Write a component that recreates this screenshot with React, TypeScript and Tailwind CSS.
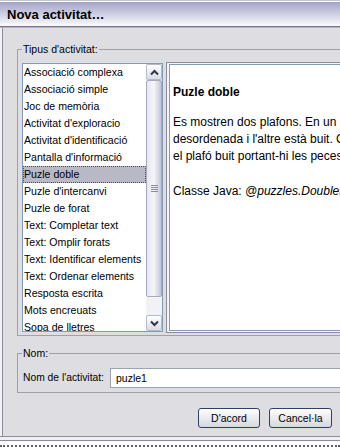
import React from "react";

const items = [
  "Associació complexa",
  "Associació simple",
  "Joc de memòria",
  "Activitat d'exploracio",
  "Activitat d'identificació",
  "Pantalla d'informació",
  "Puzle doble",
  "Puzle d'intercanvi",
  "Puzle de forat",
  "Text: Completar text",
  "Text: Omplir forats",
  "Text: Identificar elements",
  "Text: Ordenar elements",
  "Resposta escrita",
  "Mots encreuats",
  "Sopa de lletres",
];

function Chevron({ up }: { up: boolean }) {
  return (
    <svg width="9" height="7" viewBox="0 0 9 7">
      <polyline
        points={up ? "1,5.5 4.5,2 8,5.5" : "1,1.5 4.5,5 8,1.5"}
        fill="none"
        stroke="#33334a"
        strokeWidth="2"
      />
    </svg>
  );
}

function ScrollButton({ up }: { up: boolean }) {
  return (
    <div className="h-[16px] shrink-0 rounded-[2px] border border-[#b4bccc] bg-gradient-to-b from-white to-[#dcdce8] flex items-center justify-center">
      <Chevron up={up} />
    </div>
  );
}

export default function App() {
  return (
    <div className="w-[340px] h-[448px] overflow-hidden bg-white font-['Liberation_Sans',Arial,sans-serif] text-black flex flex-col">
      {/* title bar */}
      <div className="h-[28px] shrink-0 border-t border-[#c4c4d0] flex flex-col">
        <div className="flex-1 border-t border-white border-b border-b-[#74748c] bg-gradient-to-b from-[#a3a3c7] to-[#fbfbff] flex items-center pl-[7px]">
          <span className="text-[13px] font-bold leading-none">Nova activitat…</span>
        </div>
        <div className="h-px bg-[#b4b4c0]" />
      </div>

      {/* body */}
      <div className="flex-1 flex pl-[2px] bg-[#f2f2f6] min-h-0">
        <div className="flex-1 border-l border-[#8c8c98] bg-[#dedee2] flex flex-col overflow-hidden">
          {/* Tipus d'activitat group */}
          <div className="relative mt-[21px] ml-[14px] w-[380px] shrink-0 border border-[#a0a0a8] pt-[13px] pl-[4px] pb-[3px]">
            <span className="absolute left-[4px] top-[-7px] px-px bg-[#dedee2] text-[10.5px] leading-[13px]">
              Tipus d'activitat:
            </span>
            <div className="flex h-[269px]">
              {/* list */}
              <div className="w-[141px] h-[269px] shrink-0 border border-[#7f9db9] bg-white flex">
                <div className="flex-1 overflow-hidden">
                  {items.map((it, i) => (
                    <div
                      key={it}
                      className={
                        i === 6
                          ? "h-[17px] leading-[15px] border border-dotted border-[#4a4a5a] bg-[#b9b9c5] text-[10.6px] whitespace-nowrap"
                          : "h-[17px] leading-[15px] border border-transparent text-[10.6px] whitespace-nowrap"
                      }
                    >
                      {it}
                    </div>
                  ))}
                </div>
                <div className="w-[16px] shrink-0 flex flex-col bg-[#f2f2f6]">
                  <ScrollButton up={true} />
                  <div className="h-[217px] shrink-0 rounded-[2px] border border-[#a8a8c0] bg-gradient-to-r from-[#e6e6f0] via-[#f6f6fa] to-[#c4c4d8] flex items-center justify-center">
                    <div className="flex flex-col gap-px">
                      <div className="w-[7px] h-px bg-[#8a8aa0]" />
                      <div className="w-[7px] h-px bg-[#8a8aa0]" />
                      <div className="w-[7px] h-px bg-[#8a8aa0]" />
                      <div className="w-[7px] h-px bg-[#8a8aa0]" />
                    </div>
                  </div>
                  <div className="flex-1" />
                  <ScrollButton up={false} />
                </div>
              </div>
              {/* description panel */}
              <div className="ml-[3px] -mt-px h-[271px] w-[230px] shrink-0 border border-[#8e8e9a] bg-[#f4f4f6] px-[2px] py-px">
                <div className="h-full border border-[#7f9db9] bg-white pl-[3px] pt-[19px] overflow-hidden text-[12px] whitespace-nowrap">
                  <div className="font-bold leading-[16px] mb-[14px]">Puzle doble</div>
                  <div className="leading-[17px]">
                    <div>Es mostren dos plafons. En un d'ells hi ha la informació</div>
                    <div>desordenada i l'altre està buit. Cal reconstruir la informació en</div>
                    <div>el plafó buit portant-hi les peces una a una.</div>
                  </div>
                  <div className="leading-[17px] mt-[18px]">
                    Classe Java: <span className="italic">@puzzles.DoublePuzzle</span>
                  </div>
                </div>
              </div>
            </div>
          </div>

          {/* Nom group */}
          <div className="relative mt-[17px] ml-[14px] w-[380px] shrink-0 border border-[#a0a0a8] pt-[14px] pb-[4px] pl-[5px] flex items-center">
            <span className="absolute left-[4px] top-[-7px] px-px bg-[#dedee2] text-[10.5px] leading-[13px]">
              Nom:
            </span>
            <span className="w-[87px] shrink-0 text-[10.3px] leading-[20px]">Nom de l'activitat:</span>
            <div className="w-[260px] h-[20px] shrink-0 border border-[#9ca4b0] bg-white pl-[5px] text-[10.5px] leading-[18px]">
              puzle1
            </div>
          </div>

          {/* buttons */}
          <div className="mt-[15px] flex justify-end gap-[9px] pr-[8px]">
            <button className="w-[62px] h-[20px] rounded-[3px] border border-[#2e4068] bg-gradient-to-b from-white to-[#d6d6e0] text-[10.5px] leading-[18px] text-black">
              D'acord
            </button>
            <button className="w-[63px] h-[20px] rounded-[3px] border border-[#2e4068] bg-gradient-to-b from-white to-[#d6d6e0] text-[10.5px] leading-[18px] text-black">
              Cancel·la
            </button>
          </div>
        </div>
      </div>

      {/* bottom frame */}
      <div className="h-[12px] shrink-0 flex flex-col bg-white">
        <div className="h-px bg-[#8c8c98]" />
        <div className="h-[3px] bg-[#f0f0f4]" />
        <div className="h-px bg-[#8c8c98]" />
        <div className="h-[4px] bg-white" />
        <div className="h-[2px] border-t-2 border-dotted border-[#606070]" />
      </div>
    </div>
  );
}
